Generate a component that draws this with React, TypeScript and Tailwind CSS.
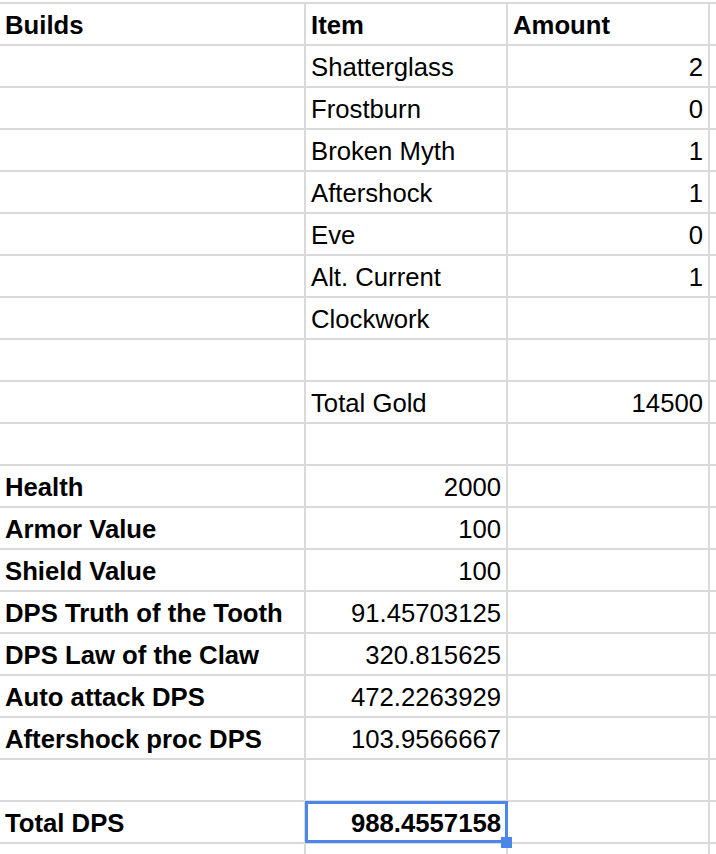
import React from "react";

type Row = { a?: string; b?: string; c?: string; aBold?: boolean; bBold?: boolean; cBold?: boolean; bRight?: boolean; cRight?: boolean; selected?: boolean };

const rows: Row[] = [
  { a: "Builds", b: "Item", c: "Amount", aBold: true, bBold: true, cBold: true },
  { b: "Shatterglass", c: "2", cRight: true },
  { b: "Frostburn", c: "0", cRight: true },
  { b: "Broken Myth", c: "1", cRight: true },
  { b: "Aftershock", c: "1", cRight: true },
  { b: "Eve", c: "0", cRight: true },
  { b: "Alt. Current", c: "1", cRight: true },
  { b: "Clockwork" },
  {},
  { b: "Total Gold", c: "14500", cRight: true },
  {},
  { a: "Health", b: "2000", aBold: true, bRight: true },
  { a: "Armor Value", b: "100", aBold: true, bRight: true },
  { a: "Shield Value", b: "100", aBold: true, bRight: true },
  { a: "DPS Truth of the Tooth", b: "91.45703125", aBold: true, bRight: true },
  { a: "DPS Law of the Claw", b: "320.815625", aBold: true, bRight: true },
  { a: "Auto attack DPS", b: "472.2263929", aBold: true, bRight: true },
  { a: "Aftershock proc DPS", b: "103.9566667", aBold: true, bRight: true },
  {},
  { a: "Total DPS", b: "988.4557158", aBold: true, bBold: true, bRight: true, selected: true },
  {},
];

function Cell({ text, bold, right, selected }: { text?: string; bold?: boolean; right?: boolean; selected?: boolean }) {
  return (
    <div
      className={
        "relative flex items-end h-[42px] pb-[6px] px-[5px] border-r-2 border-b-2 border-[#dadada] whitespace-nowrap overflow-visible leading-[26px] " +
        (right ? "justify-end " : "justify-start ") +
        (bold ? "font-bold " : "font-normal ") +
        (selected ? "z-10" : "")
      }
    >
      <span>{text ?? ""}</span>
      {selected && (
        <>
          <div className="absolute left-[-1px] top-[-1px] right-[-2px] bottom-[-1px] border-[3px] border-[#4a87e8] pointer-events-none" />
          <div className="absolute right-[-6px] bottom-[-6px] w-[11px] h-[11px] bg-[#4a87e8] pointer-events-none" />
        </>
      )}
    </div>
  );
}

export default function App() {
  return (
    <div
      className="w-[716px] h-[854px] overflow-hidden bg-white text-black text-[25.7px]"
      style={{ fontFamily: '"Liberation Sans", Arial, sans-serif' }}
    >
      <div className="mt-[2px] border-t-2 border-[#dadada] grid grid-cols-[306px_202px_202px_1fr]">
        {rows.map((r, i) => (
          <React.Fragment key={i}>
            <Cell text={r.a} bold={r.aBold} />
            <Cell text={r.b} bold={r.bBold} right={r.bRight} selected={r.selected} />
            <Cell text={r.c} bold={r.cBold} right={r.cRight} />
            <div className="h-[42px] border-b-2 border-[#dadada]" />
          </React.Fragment>
        ))}
      </div>
    </div>
  );
}
